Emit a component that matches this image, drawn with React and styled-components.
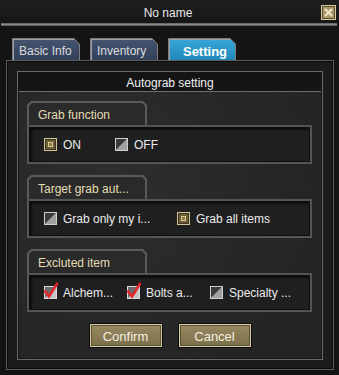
import React from "react"
import styled, { createGlobalStyle } from "styled-components"

const GlobalStyle = createGlobalStyle`
  html, body {
    margin: 0;
    padding: 0;
    background: #121212;
  }
  * {
    box-sizing: border-box;
  }
`

const Window = styled.div`
  width: 339px;
  height: 375px;
  background: #141414;
  font-family: "Liberation Sans", Arial, sans-serif;
  font-size: 12px;
  color: #e6e6e6;
  overflow: hidden;
`

const TitleBar = styled.div`
  height: 23px;
  display: grid;
  grid-template-columns: 1fr auto 1fr;
  align-items: center;
  background: linear-gradient(#1e1e1e, #161616);
  padding: 0 3px 0 0;
`

const Title = styled.div`
  grid-column: 2;
  font-size: 12px;
  color: #e8e8e8;
  padding-top: 3px;
`

const CloseButton = styled.div`
  justify-self: end;
  width: 15px;
  height: 15px;
  margin-top: 1px;
  border: 1px solid #d8c99a;
  background: #a8976a;
  display: flex;
  align-items: center;
  justify-content: center;
  box-shadow: inset 0 0 0 1px #5e5236;
`

const Rule = styled.div`
  height: 3px;
  margin: 0 2px 0 1px;
  background: linear-gradient(#5a5a5a, #8a8a8a 50%, #4a4a4a);
`

const TabRow = styled.div`
  display: flex;
  gap: 10px;
  padding: 12px 0 0 12px;
  height: 34px;
`

const TabEdge = styled.div`
  width: ${(p) => p.$w}px;
  height: 22px;
  padding: 1px 1px 0 1px;
  background: #7c7c7c;
  clip-path: polygon(0 0, calc(100% - 6px) 0, 100% 6px, 100% 100%, 0 100%);
`

const TabFace = styled.div`
  height: 100%;
  display: flex;
  align-items: center;
  padding: 3px 0 0 6px;
  background: ${(p) =>
    p.$active
      ? "linear-gradient(#37a6d8, #2288bb)"
      : "linear-gradient(#44546f, #33405a)"};
  color: ${(p) => (p.$active ? "#ffffff" : "#dcdcdc")};
  font-weight: ${(p) => (p.$active ? "bold" : "normal")};
  font-size: ${(p) => (p.$active ? "13px" : "12px")};
  justify-content: ${(p) => (p.$active ? "center" : "flex-start")};
  clip-path: polygon(0 0, calc(100% - 5px) 0, 100% 5px, 100% 100%, 0 100%);
  box-shadow: inset 1px 1px 0 #9aa0aa;
`

const Panel = styled.div`
  margin: 0 5px 0 6px;
  height: 310px;
  padding: 10px;
  background: #1b1b1b;
  border: 1px solid #5c5c5c;
  box-shadow: inset 0 0 0 1px #0c0c0c;
`

const InnerPanel = styled.div`
  height: 289px;
  display: flex;
  flex-direction: column;
  background: radial-gradient(circle at 30% 40%, #2e2e2e, #262626 60%, #232323);
  border: 1px solid #6a6a6a;
  box-shadow: inset 0 0 0 1px #161616;
`

const PanelHeader = styled.div`
  height: 19px;
  display: flex;
  align-items: center;
  justify-content: center;
  padding-top: 2px;
  background: #141414;
  border-bottom: 1px solid #6e6e6e;
  color: #f0f0f0;
  margin: 1px 1px 0 1px;
`

const GroupList = styled.div`
  display: flex;
  flex-direction: column;
  gap: 11px;
  padding: 9px 10px 0 9px;
`

const Group = styled.div`
  display: flex;
  flex-direction: column;
`

const GroupTab = styled.div`
  width: 120px;
  height: 24px;
  padding: 2px 2px 0 2px;
  background: #5a5a5a;
  clip-path: polygon(4px 0, calc(100% - 4px) 0, 100% 4px, 100% 100%, 0 100%, 0 4px);
`

const GroupTabFace = styled.div`
  height: 100%;
  display: flex;
  align-items: center;
  padding: 2px 0 0 9px;
  color: #e4dcb4;
  background: #2a2a2a;
  clip-path: polygon(3px 0, calc(100% - 3px) 0, 100% 3px, 100% 100%, 0 100%, 0 3px);
`

const GroupBody = styled.div`
  height: 39px;
  display: flex;
  align-items: center;
  padding: 0 0 0 15px;
  background: #1f1f1f;
  border: 2px solid #555555;
  box-shadow: inset 0 0 0 1px #0e0e0e, inset 2px 2px 3px #000;
`

const Option = styled.div`
  width: ${(p) => p.$w}px;
  display: flex;
  align-items: center;
  gap: 6px;
  color: #ececec;
  white-space: nowrap;
`

const Box = styled.svg`
  width: 13px;
  height: 13px;
  flex: none;
  overflow: visible;
`

const ButtonRow = styled.div`
  display: flex;
  justify-content: center;
  gap: 17px;
  padding: 12px 0 0 0;
`

const Button = styled.div`
  width: 72px;
  height: 23px;
  display: flex;
  align-items: center;
  justify-content: center;
  padding-top: 2px;
  font-size: 13px;
  color: #f4f0e0;
  background: linear-gradient(#978a62, #7b6e4a);
  border: 1px solid #d9cd9f;
  outline: 1px solid #0a0a0a;
  box-shadow: inset 0 0 0 1px #5c5236;
`

const CheckBox = ({ kind }) => {
  if (kind === "gold") {
    return (
      <Box viewBox="0 0 13 13">
        <rect x="0.5" y="0.5" width="12" height="12" fill="#3a3120" stroke="#d2c597" />
        <rect x="2" y="2" width="9" height="9" fill="#6e5e38" />
        <rect x="4" y="4" width="5" height="5" fill="#d8c98e" />
        <rect x="5" y="5" width="3" height="3" fill="#8f7b48" />
      </Box>
    )
  }
  if (kind === "red") {
    return (
      <Box viewBox="0 0 13 13">
        <rect x="0.5" y="0.5" width="12" height="12" fill="#c4c4c4" stroke="#dadada" />
        <polygon points="1,1 12,1 1,12" fill="#6a6a6a" />
        <path
          d="M0.5 4.5 L5 10.5 L13.5 -3"
          fill="none"
          stroke="#e3262c"
          strokeWidth="2.6"
        />
      </Box>
    )
  }
  return (
    <Box viewBox="0 0 13 13">
      <rect x="0.5" y="0.5" width="12" height="12" fill="#b8b8b8" stroke="#cfcfcf" />
      <polygon points="1,1 12,1 1,12" fill="#3a3a3a" />
      <polygon points="12,1 12,12 1,12" fill="#a0a0a0" />
    </Box>
  )
}

const groups = [
  {
    title: "Grab function",
    width: 71,
    options: [
      { label: "ON", kind: "gold" },
      { label: "OFF", kind: "off" },
    ],
  },
  {
    title: "Target grab aut...",
    width: 138,
    options: [
      { label: "Grab only my i...", kind: "off" },
      { label: "Grab all items", kind: "gold" },
    ],
  },
  {
    title: "Excluted item",
    width: 83,
    options: [
      { label: "Alchem...", kind: "red" },
      { label: "Bolts a...", kind: "red" },
      { label: "Specialty ...", kind: "off" },
    ],
  },
]

const tabs = [
  { label: "Basic Info", w: 68 },
  { label: "Inventory", w: 68 },
  { label: "Setting", w: 68, active: true },
]

export default function App() {
  return (
    <Window>
      <GlobalStyle />
      <TitleBar>
        <Title>No name</Title>
        <CloseButton>
          <svg width="9" height="9" viewBox="0 0 9 9">
            <path d="M1 1 L8 8 M8 1 L1 8" stroke="#efe6c6" strokeWidth="2" />
          </svg>
        </CloseButton>
      </TitleBar>
      <Rule />
      <TabRow>
        {tabs.map((t) => (
          <TabEdge key={t.label} $w={t.w}>
            <TabFace $active={t.active}>{t.label}</TabFace>
          </TabEdge>
        ))}
      </TabRow>
      <Panel>
        <InnerPanel>
          <PanelHeader>Autograb setting</PanelHeader>
          <GroupList>
            {groups.map((g) => (
              <Group key={g.title}>
                <GroupTab>
                  <GroupTabFace>{g.title}</GroupTabFace>
                </GroupTab>
                <GroupBody>
                  {g.options.map((o) => (
                    <Option key={o.label} $w={g.width}>
                      <CheckBox kind={o.kind} />
                      {o.label}
                    </Option>
                  ))}
                </GroupBody>
              </Group>
            ))}
          </GroupList>
          <ButtonRow>
            <Button>Confirm</Button>
            <Button>Cancel</Button>
          </ButtonRow>
        </InnerPanel>
      </Panel>
    </Window>
  )
}
